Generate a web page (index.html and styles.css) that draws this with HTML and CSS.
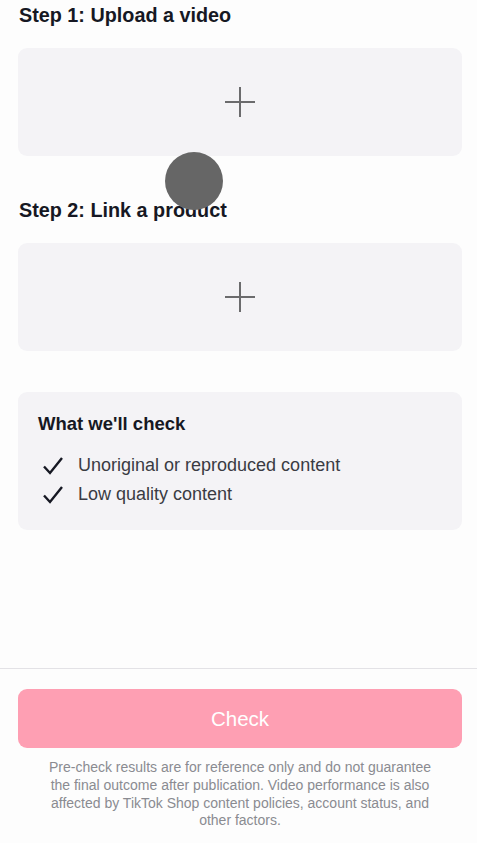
FILE: index.html
```html
<!DOCTYPE html>
<html lang="en">
<head>
	<meta charset="UTF-8">
	<title>Pre-check</title>
	<link rel="stylesheet" href="styles.css">
</head>
<body>
	<div class="page">
		<div class="content">
			<h2 class="step-title">Step 1: Upload a video</h2>
			<div class="picker">
				<svg class="plus" width="32" height="32" viewBox="0 0 32 32"><path d="M16 1v30M1 16h30" stroke="#6b6b6d" stroke-width="2" fill="none"/></svg>
			</div>

			<h2 class="step-title step2">Step 2: Link a product</h2>
			<div class="picker">
				<svg class="plus" width="32" height="32" viewBox="0 0 32 32"><path d="M16 1v30M1 16h30" stroke="#6b6b6d" stroke-width="2" fill="none"/></svg>
			</div>

			<div class="checks">
				<h3>What we'll check</h3>
				<ul>
					<li><svg width="22" height="20" viewBox="0 0 22 20"><path d="M2 10.5l6 6.5L20 2" stroke="#161823" stroke-width="2.4" fill="none"/></svg>Unoriginal or reproduced content</li>
					<li><svg width="22" height="20" viewBox="0 0 22 20"><path d="M2 10.5l6 6.5L20 2" stroke="#161823" stroke-width="2.4" fill="none"/></svg>Low quality content</li>
				</ul>
			</div>
		</div>

		<div class="footer">
			<button class="check-btn">Check</button>
			<p class="note">Pre-check results are for reference only and do not guarantee the final outcome after publication. Video performance is also affected by TikTok Shop content policies, account status, and other factors.</p>
		</div>

		<!-- touch indicator from screen recording -->
		<div class="touch"></div>
	</div>
</body>
</html>
```

FILE: styles.css
```css
*{margin: 0;padding: 0;box-sizing: border-box;}
body{
	background: #fdfdfd;
	font-family: "Liberation Sans", Arial, sans-serif;
	color: #161823;
}
.page{
	width: 477px;
	height: 843px;
	position: relative;
	display: flex;
	flex-direction: column;
}
.content{
	flex: 1;
	padding: 0 15px 0 18px;
}
.step-title{
	font-size: 19.8px;
	font-weight: bold;
	line-height: 24px;
	padding-top: 3px;
	margin-left: 1px;
	margin-bottom: 21px;
}
.step2{
	padding-top: 42px;
}
.picker{
	height: 108px;
	background: #f4f3f6;
	border-radius: 9px;
	display: flex;
	align-items: center;
	justify-content: center;
}
.checks{
	margin-top: 41px;
	background: #f4f3f6;
	border-radius: 9px;
	padding: 20px 20px 21px 20px;
}
.checks h3{
	font-size: 18.5px;
	font-weight: bold;
	line-height: 24px;
	margin-bottom: 15px;
}
.checks ul{
	list-style: none;
}
.checks li{
	display: flex;
	align-items: center;
	gap: 14px;
	margin-left: 4px;
	font-size: 18px;
	line-height: 29px;
	color: #3a3b43;
}
.checks li svg{
	flex-shrink: 0;
}
.footer{
	border-top: 1px solid #e3e2e6;
	padding: 20px 15px 13px 18px;
}
.check-btn{
	display: block;
	width: 100%;
	height: 59px;
	border: none;
	border-radius: 9px;
	background: #fe9fb3;
	color: #fff;
	font-family: "Liberation Sans", Arial, sans-serif;
	font-size: 20.5px;
}
.note{
	margin-top: 11px;
	text-align: center;
	font-size: 14px;
	line-height: 17.7px;
	color: #8a8b91;
	padding: 0 27px;
}
.touch{
	position: absolute;
	left: 165px;
	top: 152px;
	width: 58px;
	height: 58px;
	border-radius: 50%;
	background: #666;
}
```
